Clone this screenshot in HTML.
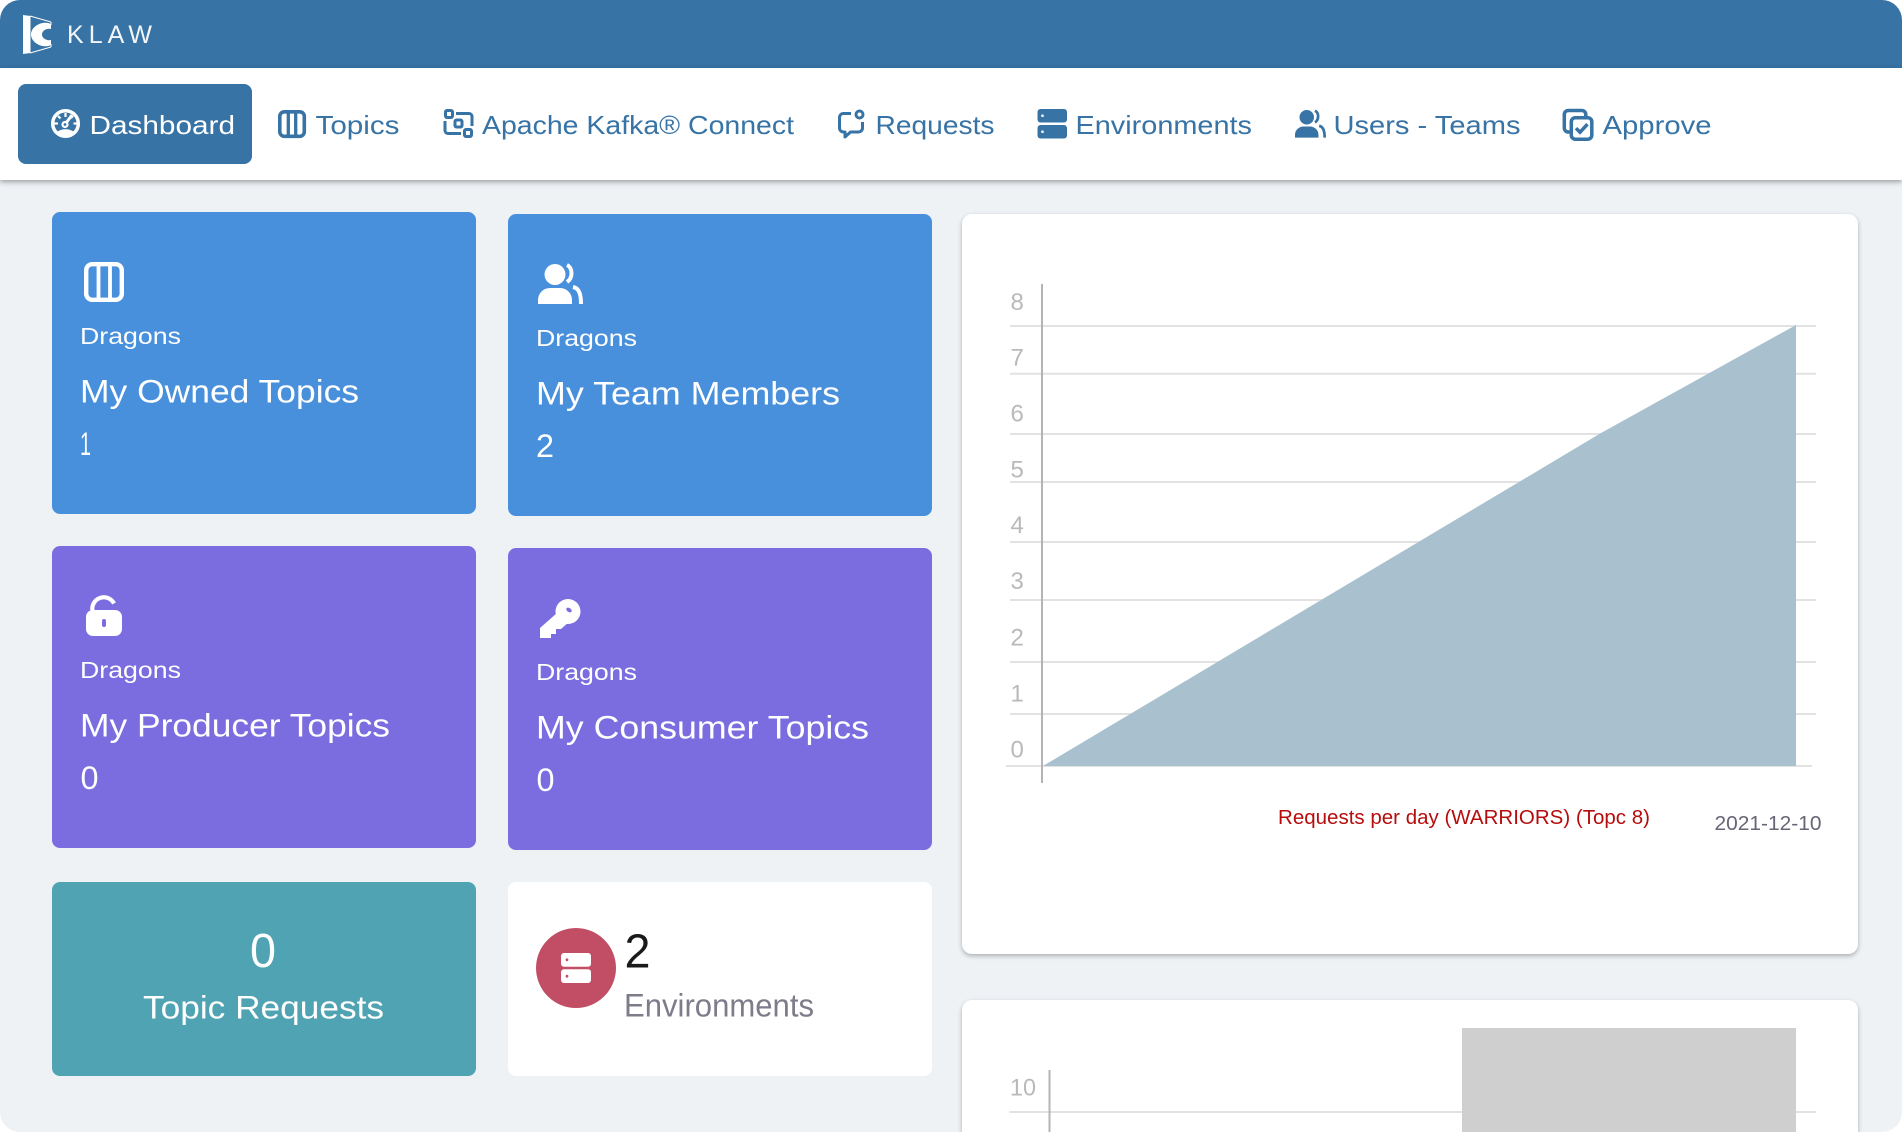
<!DOCTYPE html>
<html lang="en">
<head>
<meta charset="utf-8">
<title>Klaw Dashboard</title>
<style>
html,body{margin:0;padding:0;width:1902px;height:1132px;overflow:hidden;background:#fff}
#app{position:relative;width:1902px;height:1132px;overflow:hidden;background:#EEF2F5;border-radius:20px}
#top{position:absolute;left:0;top:0;width:1902px;height:68px;background:#3773A5}
#nav{position:absolute;left:0;top:68px;width:1902px;height:112px;background:#fff;box-shadow:0 2px 5px rgba(0,0,0,.35)}
#active{position:absolute;left:18px;top:84px;width:234px;height:80px;background:#3773A5;border-radius:8px}
.card{position:absolute;width:424px;border-radius:8px}
.blue{background:#4990DC;height:302px}
.purple{background:#7B6CE0;height:302px}
.chart{position:absolute;left:962px;width:896px;background:#fff;border-radius:10px;box-shadow:0 2px 5px rgba(0,0,0,.28)}
svg#ov{position:absolute;left:0;top:0;display:block}
text{font-family:"Liberation Sans",sans-serif}
.n{font-size:26px;fill:#3773A5}
.d{font-size:23px;fill:#fff}
.t{font-size:32px;fill:#fff}
.y{font-size:24px;fill:#b9b9b9}
</style>
</head>
<body>
<div id="app">
<div id="top"></div>
<div id="nav"></div>
<div id="active"></div>
<div class="card blue" style="left:52px;top:212px"></div>
<div class="card blue" style="left:508px;top:214px"></div>
<div class="card purple" style="left:52px;top:546px"></div>
<div class="card purple" style="left:508px;top:548px"></div>
<div class="card" style="left:52px;top:882px;height:194px;background:#50A3B2"></div>
<div class="card" style="left:508px;top:882px;height:194px;background:#fff"></div>
<div class="chart" style="top:214px;height:740px"></div>
<div class="chart" style="top:1000px;height:132px;border-radius:10px 10px 0 0"></div>

<svg id="ov" width="1902" height="1132" viewBox="0 0 1902 1132" xmlns="http://www.w3.org/2000/svg">
<!-- logo -->
<g fill="#fff">
<path d="M23 15L30.500 16V53L23 54Z"/>
<path d="M30 16L51 22M30 53L51 47M51 22V25M51 44V47" stroke="#fff" stroke-width="1" fill="none"/>
<path d="M51 24C43 20 31 26 31 34.500C31 43 43 49 51 45V40C47 41 42 38.500 42 34.500C42 30.500 47 28 51 29Z"/>
</g>
<text x="67" y="43" font-size="25" fill="#fff" textLength="85" lengthAdjust="spacing" opacity=".94">KLAW</text>

<!-- nav: dashboard -->
<g transform="translate(51,109)" fill="none" stroke="#fff">
<circle cx="14.500" cy="14.500" r="12.800" stroke-width="3.500"/>
<path d="M14.500 4V8M7 7L9.500 9.500M22 7L20 9M3.500 14.500H7M22.500 14.500H26" stroke-width="2.200"/>
<path d="M15 14L21 6" stroke-width="3"/>
<circle cx="14" cy="15.500" r="2.500" stroke-width="2.200"/>
<path d="M5 24C9 19 20 19 24 24L20 28H9Z" fill="#fff" stroke="none"/>
</g>
<text x="89.500" y="134" class="n" style="fill:#fff" textLength="145.500" lengthAdjust="spacingAndGlyphs">Dashboard</text>

<!-- nav: topics -->
<g transform="translate(278,110)" fill="none" stroke="#3773A5">
<rect x="1.800" y="1.800" width="24.500" height="24.500" rx="4.500" stroke-width="3.600"/>
<path d="M10.300 2V26M17.700 2V26" stroke-width="3.300"/>
</g>
<text x="315.500" y="134" class="n" textLength="84" lengthAdjust="spacingAndGlyphs">Topics</text>

<!-- nav: connect -->
<g transform="translate(444,109)" fill="none" stroke="#3773A5" stroke-width="3">
<rect x="1.500" y="1.500" width="7" height="7" rx="1.500"/>
<rect x="11" y="11" width="7" height="7" rx="1.500"/>
<rect x="20.500" y="20.500" width="7" height="7" rx="1.500"/>
<path d="M12 4.500H25A3 3 0 0 1 28 7.500V17"/>
<path d="M17 24.500H4A3 3 0 0 1 1 21.500V12"/>
</g>
<text x="482" y="134" class="n" textLength="312" lengthAdjust="spacingAndGlyphs">Apache Kafka® Connect</text>

<!-- nav: requests -->
<g transform="translate(838,110)" fill="none" stroke="#3773A5" stroke-width="3" stroke-linejoin="round">
<path d="M13 3.500H5.500A4 4 0 0 0 1.500 7.500V18A4 4 0 0 0 5.500 22H7V27L12.500 22H20A4 4 0 0 0 24.500 18V12"/>
<circle cx="21.500" cy="4.500" r="3.500"/>
</g>
<text x="875.500" y="134" class="n" textLength="119" lengthAdjust="spacingAndGlyphs">Requests</text>

<!-- nav: environments -->
<g transform="translate(1037.500,109)">
<rect x="0" y="0" width="29.500" height="13.500" rx="3" fill="#3773A5"/>
<rect x="0" y="16" width="29.500" height="13.500" rx="3" fill="#3773A5"/>
<circle cx="5" cy="6.700" r="1.300" fill="#fff"/>
<circle cx="5" cy="22.700" r="1.300" fill="#fff"/>
</g>
<text x="1075.500" y="134" class="n" textLength="176.500" lengthAdjust="spacingAndGlyphs">Environments</text>

<!-- nav: users -->
<g transform="translate(1295,110) scale(.69)" fill="#3773A5">
<circle cx="17" cy="10.500" r="10.500"/>
<path d="M29 1C35 4 35 14 29 18" fill="none" stroke="#3773A5" stroke-width="4"/>
<path d="M0 40V36A12 12 0 0 1 12 24H22A12 12 0 0 1 34 36V40Z"/>
<path d="M35 23C41 24 43 30 43 40" fill="none" stroke="#3773A5" stroke-width="4"/>
</g>
<text x="1333.500" y="134" class="n" textLength="187" lengthAdjust="spacingAndGlyphs">Users - Teams</text>

<!-- nav: approve -->
<g transform="translate(1562.500,108.700)" fill="none" stroke="#3773A5" stroke-width="3.500">
<rect x="1.800" y="1.800" width="21.500" height="21.500" rx="4"/>
<rect x="8.800" y="9" width="20.500" height="21.500" rx="4" fill="#fff"/>
<path d="M13.500 19.500L17.500 23.500L25 15.500"/>
</g>
<text x="1602.500" y="134" class="n" textLength="109" lengthAdjust="spacingAndGlyphs">Approve</text>

<!-- card 1 -->
<g transform="translate(84,262)" fill="none" stroke="#fff">
<rect x="2.200" y="2.200" width="35.600" height="35.600" rx="6" stroke-width="4.400"/>
<path d="M14.500 2V38M26 2V38" stroke-width="3.800"/>
</g>
<text x="80" y="344" class="d" textLength="101" lengthAdjust="spacingAndGlyphs">Dragons</text>
<text x="80" y="402.700" class="t" textLength="279" lengthAdjust="spacingAndGlyphs">My Owned Topics</text>
<text x="80" y="455" class="t" textLength="11" lengthAdjust="spacingAndGlyphs">1</text>

<!-- card 2 -->
<g transform="translate(538,264)" fill="#fff">
<circle cx="17" cy="10.500" r="10.500"/>
<path d="M29 1C35 4 35 14 29 18" fill="none" stroke="#fff" stroke-width="4"/>
<path d="M0 40V36A12 12 0 0 1 12 24H22A12 12 0 0 1 34 36V40Z"/>
<path d="M35 23C41 24 43 30 43 40" fill="none" stroke="#fff" stroke-width="4"/>
</g>
<text x="536" y="346" class="d" textLength="101" lengthAdjust="spacingAndGlyphs">Dragons</text>
<text x="536" y="404.700" class="t" textLength="304" lengthAdjust="spacingAndGlyphs">My Team Members</text>
<text x="536" y="457" class="t" textLength="18" lengthAdjust="spacingAndGlyphs">2</text>

<!-- card 3 -->
<g transform="translate(86,596)">
<rect x="0" y="14" width="36" height="26" rx="7" fill="#fff"/>
<path d="M6.500 15A11.500 11.500 0 0 1 28 7.500" fill="none" stroke="#fff" stroke-width="4.200"/>
<rect x="16" y="23" width="4" height="8" rx="2" fill="#7B6CE0"/>
</g>
<text x="80" y="678" class="d" textLength="101" lengthAdjust="spacingAndGlyphs">Dragons</text>
<text x="80" y="736.700" class="t" textLength="310" lengthAdjust="spacingAndGlyphs">My Producer Topics</text>
<text x="80.500" y="789" class="t" textLength="18" lengthAdjust="spacingAndGlyphs">0</text>

<!-- card 4 -->
<g transform="translate(540,598)">
<circle cx="28" cy="13.500" r="12.500" fill="#fff"/>
<path d="M17 15L0 30V40H11V36H16V31H21L29 24Z" fill="#fff"/>
<ellipse cx="29" cy="12" rx="3" ry="2" transform="rotate(35 29 12)" fill="#7B6CE0"/>
</g>
<text x="536" y="680" class="d" textLength="101" lengthAdjust="spacingAndGlyphs">Dragons</text>
<text x="536" y="738.700" class="t" textLength="333" lengthAdjust="spacingAndGlyphs">My Consumer Topics</text>
<text x="536.500" y="791" class="t" textLength="18" lengthAdjust="spacingAndGlyphs">0</text>

<!-- card 5 -->
<text x="250" y="967" font-size="48" fill="#fff" textLength="26" lengthAdjust="spacingAndGlyphs">0</text>
<text x="143" y="1018.700" class="t" textLength="241" lengthAdjust="spacingAndGlyphs">Topic Requests</text>

<!-- card 6 -->
<circle cx="576" cy="968" r="40" fill="#C24E66"/>
<g transform="translate(561,953)">
<rect x="0" y="0" width="30" height="13.700" rx="3" fill="#fff"/>
<rect x="0" y="16.300" width="30" height="13.700" rx="3" fill="#fff"/>
<circle cx="6" cy="6.800" r="1.400" fill="#C24E66"/>
<circle cx="6" cy="23.200" r="1.400" fill="#C24E66"/>
</g>
<text x="624.500" y="967.700" font-size="48" fill="#1a1a1a" textLength="26" lengthAdjust="spacingAndGlyphs">2</text>
<text x="624" y="1016.700" class="t" style="fill:#7E7B8A" textLength="190" lengthAdjust="spacingAndGlyphs">Environments</text>

<!-- chart 1 -->
<g stroke="#e2e2e2" stroke-width="2">
<path d="M1010 326H1816M1010 373.700H1816M1010 434H1816M1010 482H1816M1010 542H1816M1010 600H1816M1010 662H1816M1010 714H1816M1006 766H1812"/>
</g>
<path d="M1042 284V783" stroke="#b4b4b8" stroke-width="2"/>
<polygon points="1043,766 1601,433 1796,325 1796,766" fill="#A9C1CE"/>
<text x="1010.500" y="310" class="y">8</text>
<text x="1010.500" y="365.700" class="y">7</text>
<text x="1010.500" y="421.700" class="y">6</text>
<text x="1010.500" y="477.700" class="y">5</text>
<text x="1010.500" y="533" class="y">4</text>
<text x="1010.500" y="589" class="y">3</text>
<text x="1010.500" y="645.700" class="y">2</text>
<text x="1010.500" y="701.700" class="y">1</text>
<text x="1010.500" y="757.700" class="y">0</text>
<text x="1278" y="824" font-size="20" fill="#B70C0C" textLength="372" lengthAdjust="spacingAndGlyphs">Requests per day (WARRIORS) (Topc 8)</text>
<text x="1714.500" y="830" font-size="20" fill="#666675" textLength="107" lengthAdjust="spacingAndGlyphs">2021-12-10</text>

<!-- chart 2 -->
<path d="M1009.500 1112H1816" stroke="#e2e2e2" stroke-width="2"/>
<path d="M1049.500 1070V1132" stroke="#b4b4b8" stroke-width="2"/>
<rect x="1462" y="1028" width="334" height="104" fill="#CFCFCF"/>
<text x="1010" y="1095.700" class="y" textLength="26" lengthAdjust="spacingAndGlyphs">10</text>
</svg>
</div>
</body>
</html>
